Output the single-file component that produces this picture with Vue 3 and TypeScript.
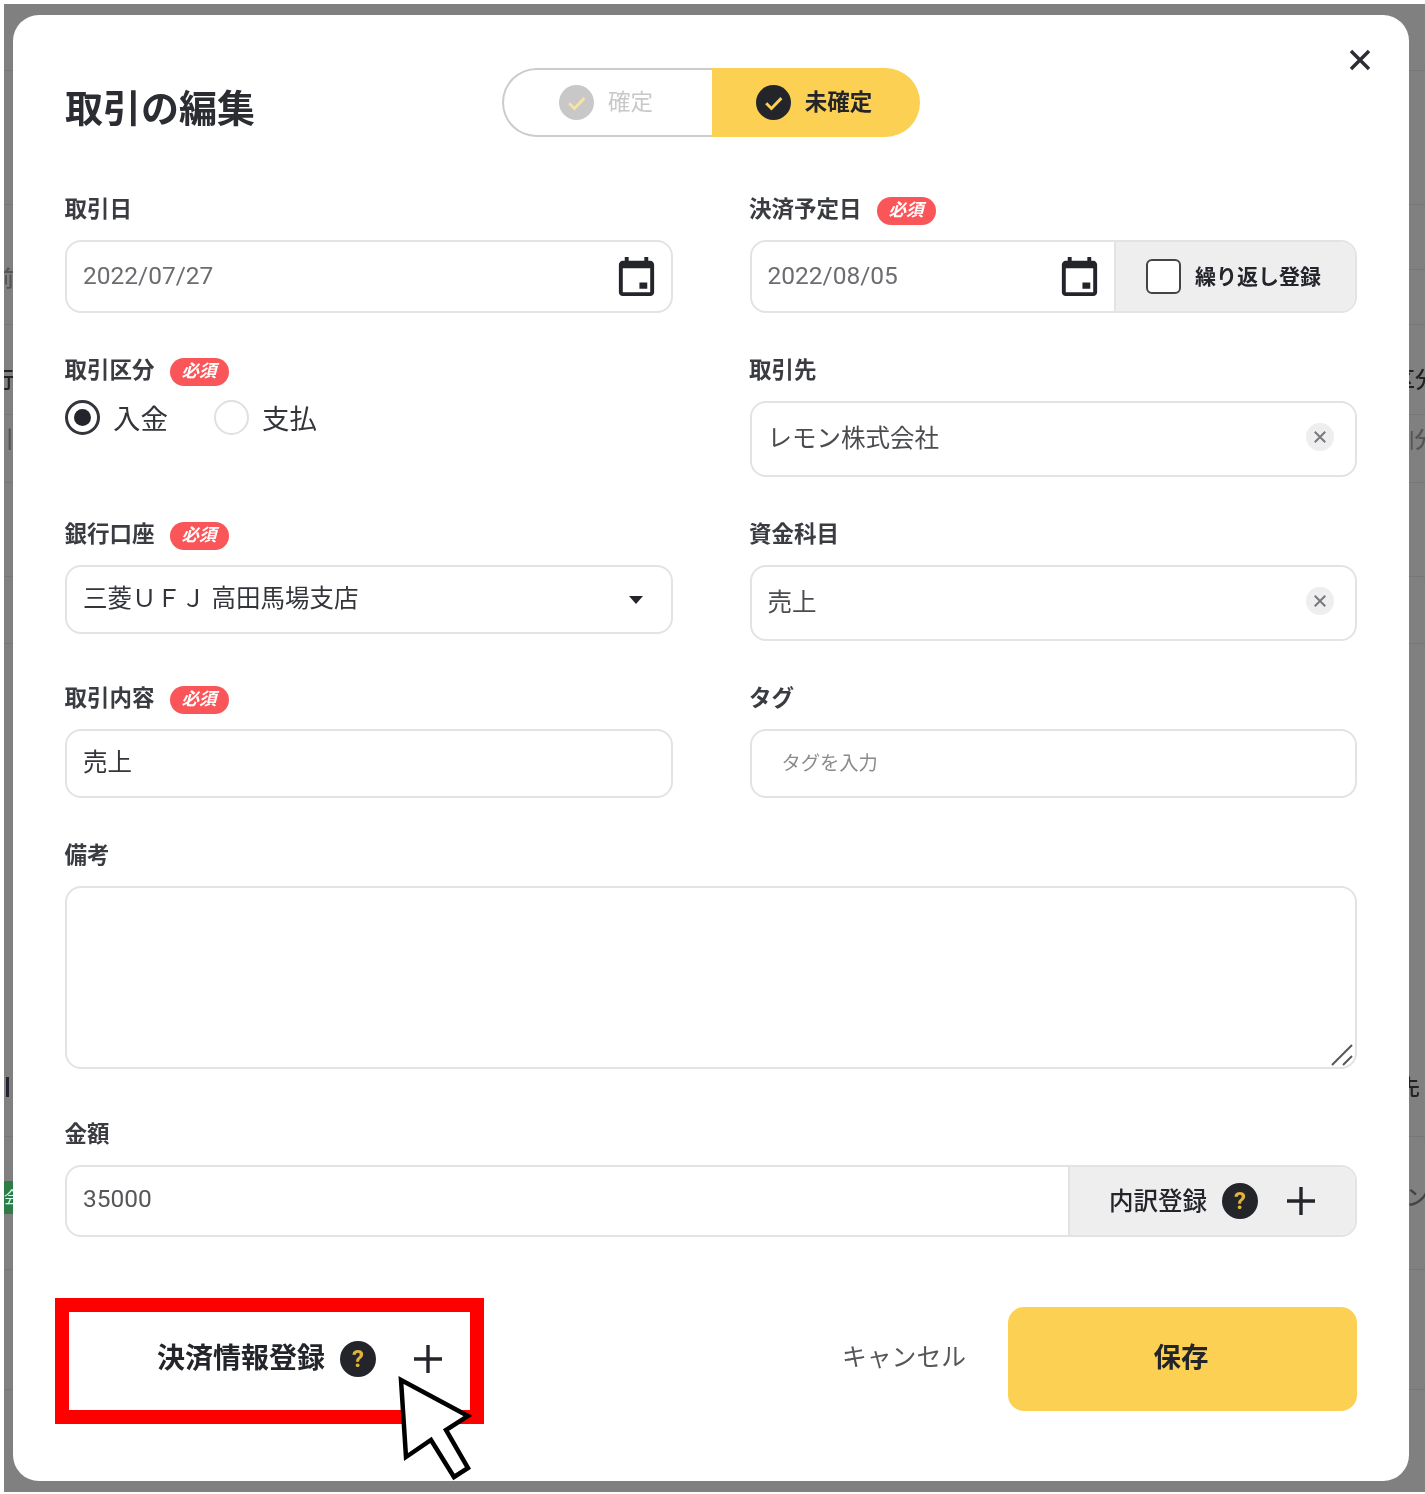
<script setup lang="ts">
const requiredMark = '必須'
const bgLines: number[] = [66, 200, 265, 320, 410, 478, 572, 639, 1132, 1265, 1385]
</script>

<template>
  <div class="page">
    <div class="overlay">
      <i v-for="y in bgLines" :key="y" class="bg-line" :style="{ top: y + 'px' }"></i>
      <span class="bg-frag f1">前</span>
      <span class="bg-frag f2">行</span>
      <span class="bg-frag f3">引</span>
      <span class="bg-bar"></span>
      <span class="bg-green">会</span>
      <span class="bg-frag r1">区分</span>
      <span class="bg-frag r2">|分</span>
      <span class="bg-frag r3">先</span>
      <span class="bg-frag r4">ン相</span>

      <section class="modal">
        <button class="close" aria-label="閉じる">
          <svg viewBox="0 0 24 24" width="24" height="24"><path d="M3 3 21 21M21 3 3 21" /></svg>
        </button>

        <header class="head">
          <h1 class="title">取引の編集</h1>
          <div class="toggle">
            <div class="seg off">
              <span class="tick grey">
                <svg viewBox="0 0 24 24" width="35" height="35"><path d="M7 12.5l3.6 3.6L17.4 9" /></svg>
              </span>
              <span class="seg-text">確定</span>
            </div>
            <div class="seg on">
              <span class="tick dark">
                <svg viewBox="0 0 24 24" width="35" height="35"><path d="M7 12.5l3.6 3.6L17.4 9" /></svg>
              </span>
              <span class="seg-text">未確定</span>
            </div>
          </div>
        </header>

        <div class="form">
          <div class="field">
            <div class="label"><span class="lt">取引日</span></div>
            <div class="box h73 date">
              <span class="value grey-text digits">2022/07/27</span>
              <svg class="cal" viewBox="0 0 24 24" width="47" height="47"><path d="M19 4h-1V2h-2v2H8V2H6v2H5C3.9 4 3 4.9 3 6v14c0 1.1.9 2 2 2h14c1.1 0 2-.9 2-2V6c0-1.1-.9-2-2-2zm0 16H5V7.8h14V20zm-5.5-5h4v3.2h-4V15z" /></svg>
            </div>
          </div>

          <div class="field">
            <div class="label"><span class="lt">決済予定日</span> <span class="badge">{{ requiredMark }}</span></div>
            <div class="box h73 split">
              <div class="split-main date with-cal">
                <span class="value grey-text digits">2022/08/05</span>
                <svg class="cal" viewBox="0 0 24 24" width="47" height="47"><path d="M19 4h-1V2h-2v2H8V2H6v2H5C3.9 4 3 4.9 3 6v14c0 1.1.9 2 2 2h14c1.1 0 2-.9 2-2V6c0-1.1-.9-2-2-2zm0 16H5V7.8h14V20zm-5.5-5h4v3.2h-4V15z" /></svg>
              </div>
              <div class="addon repeat">
                <span class="check"></span>
                <span class="addon-text">繰り返し登録</span>
              </div>
            </div>
          </div>

          <div class="field">
            <div class="label"><span class="lt">取引区分</span> <span class="badge">{{ requiredMark }}</span></div>
            <div class="radios">
              <label class="radio"><span class="dot checked"></span><span class="radio-text">入金</span></label>
              <label class="radio"><span class="dot"></span><span class="radio-text">支払</span></label>
            </div>
          </div>

          <div class="field">
            <div class="label"><span class="lt">取引先</span></div>
            <div class="box h76 clearable">
              <span class="value">レモン株式会社</span>
              <span class="clear">
                <svg viewBox="0 0 24 24" width="28" height="28"><path d="M7.5 7.5l9 9M16.500 7.5l-9 9" /></svg>
              </span>
            </div>
          </div>

          <div class="field">
            <div class="label"><span class="lt">銀行口座</span> <span class="badge">{{ requiredMark }}</span></div>
            <div class="box h69 select">
              <span class="value dark-text">三菱ＵＦＪ 高田馬場支店</span>
              <span class="caret"></span>
            </div>
          </div>

          <div class="field">
            <div class="label"><span class="lt">資金科目</span></div>
            <div class="box h76 clearable">
              <span class="value">売上</span>
              <span class="clear">
                <svg viewBox="0 0 24 24" width="28" height="28"><path d="M7.5 7.5l9 9M16.500 7.5l-9 9" /></svg>
              </span>
            </div>
          </div>

          <div class="field">
            <div class="label"><span class="lt">取引内容</span> <span class="badge">{{ requiredMark }}</span></div>
            <div class="box h69"><span class="value dark-text">売上</span></div>
          </div>

          <div class="field">
            <div class="label"><span class="lt">タグ</span></div>
            <div class="box h69"><span class="placeholder">タグを入力</span></div>
          </div>

          <div class="field wide">
            <div class="label"><span class="lt">備考</span></div>
            <div class="box memo">
              <svg class="grip" viewBox="0 0 24 24" width="24" height="24"><path d="M2 22 22 2M13 22l9-9" /></svg>
            </div>
          </div>

          <div class="field wide amount">
            <div class="label"><span class="lt">金額</span></div>
            <div class="box h72 split">
              <div class="split-main"><span class="value num">35000</span></div>
              <div class="addon detail">
                <span class="addon-text">内訳登録</span>
                <span class="help">?</span>
                <svg class="plus" viewBox="0 0 28 28" width="28" height="28"><path d="M14 0v28M0 14h28" /></svg>
              </div>
            </div>
          </div>
        </div>

        <footer class="footer">
          <div class="red-box">
            <span class="pay-label">決済情報登録</span>
            <span class="help">?</span>
            <svg class="plus" viewBox="0 0 28 28" width="28" height="28"><path d="M14 0v28M0 14h28" /></svg>
          </div>
          <div class="actions">
            <button class="cancel">キャンセル</button>
            <button class="save">保存</button>
          </div>
        </footer>

        <svg class="cursor" viewBox="0 0 80 110" width="80" height="110">
          <path d="M7 7 74 43 52 57 74 95 60 104 37 67 12 84Z" />
        </svg>
      </section>
    </div>
  </div>
</template>

<style>
html, body { margin: 0; background: #fff; }
</style>

<style scoped>
* { box-sizing: border-box; }
.page {
  width: 1425px;
  height: 1494px;
  padding: 4px 0 2px 4px;
  background: #fff;
  font-family: Roboto, "Noto Sans CJK JP", sans-serif;
  color: #23252b;
  overflow: hidden;
  filter: blur(0.45px);
}
.overlay {
  position: relative;
  width: 100%;
  height: 100%;
  padding: 11px 0 11px 9px;
  background: #808080;
  overflow: hidden;
}
.bg-line { position: absolute; left: 0; right: 0; height: 1px; background: #767676; }
.bg-frag { position: absolute; font-size: 22px; line-height: 26px; color: #333; font-weight: 500; white-space: nowrap; }
.f1 { left: -12px; top: 262px; color: #555; }
.f2 { left: -12px; top: 363px; color: #222; }
.f3 { left: -12px; top: 423px; color: #555; }
.r1 { left: 1389px; top: 363px; color: #222; }
.r2 { left: 1405px; top: 423px; color: #555; }
.r3 { left: 1394px; top: 1071px; color: #222; }
.r4 { left: 1402px; top: 1181px; color: #444; }
.bg-bar { position: absolute; left: 2px; top: 1073px; width: 3px; height: 20px; background: #223; }
.bg-green {
  position: absolute; left: 0; top: 1177px; width: 9px; height: 33px;
  background: #2e7d46; color: #cfe; font-size: 16px; line-height: 33px; overflow: hidden;
}

.modal {
  position: relative;
  width: 1396px;
  height: 1466px;
  padding: 53px 52px 0;
  background: #fff;
  border-radius: 26px;
}
.close {
  position: absolute;
  top: 33px;
  right: 37px;
  width: 24px;
  height: 24px;
  padding: 0;
  background: none;
  border: 0;
}
.close svg { display: block; fill: none; stroke: #2b2d33; stroke-width: 3.4; }

.head { display: flex; align-items: flex-start; height: 126px; }
.title {
  margin: 19px 246px 0 0;
  width: 191px;
  font-size: 38px;
  line-height: 44px;
  font-weight: 700;
  white-space: nowrap;
  color: #2b2d33;
}
.toggle { display: flex; width: 418px; height: 69px; }
.seg {
  flex: 1;
  display: flex;
  align-items: center;
  justify-content: center;
  gap: 14px;
  padding-right: 4px;
  font-size: 22.5px;
}
.seg-text { padding-bottom: 5px; }
.seg.off {
  border: 2px solid #ccc;
  border-right: 0;
  border-radius: 35px 0 0 35px;
  color: #c8c8c8;
}
.seg.on {
  background: #fcd052;
  border-radius: 0 35px 35px 0;
  font-weight: 700;
  color: #23252b;
}
.tick { display: block; width: 35px; height: 35px; border-radius: 50%; }
.tick svg { display: block; fill: none; stroke: #fcd052; stroke-width: 2; }
.tick.grey { background: #c8c8c8; }
.tick.grey svg { stroke: #f7e3a6; }
.tick.dark { background: #23252b; }

.form {
  display: grid;
  grid-template-columns: 607.5px 607.5px;
  column-gap: 77px;
  row-gap: 42px;
}
.wide { grid-column: 1 / -1; }
.amount { margin-top: 8px; }
.label {
  display: flex;
  align-items: center;
  gap: 15px;
  height: 30px;
  margin-bottom: 16px;
  font-size: 22.5px;
  font-weight: 700;
  color: #3a3c41;
  white-space: nowrap;
}
.lt { padding-bottom: 4px; margin-left: -0.5px; }
.badge {
  display: inline-block;
  width: 59px;
  height: 28px;
  margin-top: 4px;
  border-radius: 14px;
  background: #fa5558;
  color: #fff;
  font-size: 17.5px;
  line-height: 26px;
  font-weight: 700;
  font-style: italic;
  text-align: center;
}
.box {
  position: relative;
  display: flex;
  align-items: center;
  padding: 0 16px;
  border: 2px solid #e3e3e3;
  border-radius: 16px;
  background: #fff;
  overflow: hidden;
}
.h69 { height: 69px; }
.h72 { height: 72px; }
.h73 { height: 73px; }
.h76 { height: 76px; }
.memo { height: 183px; }
.value { padding-bottom: 6px; font-size: 24.5px; color: #4a4c50; white-space: nowrap; }
.value.digits { padding-bottom: 2px; }
.grey-text { color: #6b6d70; }
.dark-text { color: #33353a; }
.num { color: #55575a; }
.placeholder { margin-left: 14px; padding-bottom: 4px; font-size: 19.300px; color: #8a8a8a; }
.date { justify-content: space-between; }
.date .cal { margin-right: -5px; }
.cal { display: block; fill: #23252b; flex: none; }
.split { padding: 0; }
.split-main {
  flex: 1;
  height: 100%;
  display: flex;
  align-items: center;
  padding-left: 16px;
  min-width: 0;
}
.with-cal { padding-right: 11px; }
.with-cal .cal { margin-right: 0; }
.addon {
  flex: none;
  height: 100%;
  display: flex;
  align-items: center;
  background: #eee;
  border-left: 2px solid #e3e3e3;
  font-weight: 500;
  white-space: nowrap;
}
.addon-text { padding-bottom: 4px; }
.repeat { width: 241px; padding-left: 30px; gap: 14px; font-size: 21px; font-weight: 700; }
.check {
  display: block;
  width: 35px;
  height: 35px;
  border: 2px solid #444;
  border-radius: 6px;
  background: #fff;
}
.detail { width: 287px; padding-left: 39px; font-size: 24.5px; color: #23252b; }
.detail .help { margin-left: 15px; }
.detail .plus { margin-left: 29px; }
.help {
  flex: none;
  display: block;
  width: 36px;
  height: 36px;
  border-radius: 50%;
  background: #23252b;
  color: #e2b33b;
  font-size: 24px;
  font-weight: 700;
  line-height: 36px;
  text-align: center;
}
.plus { display: block; flex: none; fill: none; stroke: #23252b; stroke-width: 3.4; }
.clearable { justify-content: space-between; padding-right: 21px; }
.clear { display: block; width: 28px; height: 28px; margin-bottom: 4px; border-radius: 50%; background: #eee; }
.clear svg { display: block; fill: none; stroke: #77797c; stroke-width: 1.7; }
.select { justify-content: space-between; padding-right: 28px; }
.caret {
  width: 0;
  height: 0;
  border-left: 7px solid transparent;
  border-right: 7px solid transparent;
  border-top: 8px solid #23252b;
}
.grip { position: absolute; right: 1px; bottom: 0; fill: none; stroke: #55575a; stroke-width: 2; }

.radios { display: flex; gap: 46px; margin-top: -1px; }
.radio {
  display: flex;
  align-items: center;
  gap: 13px;
  height: 35px;
  font-size: 27.5px;
  color: #33353a;
}
.radio-text { padding-bottom: 2px; }
.dot {
  position: relative;
  display: block;
  width: 35px;
  height: 35px;
  border: 2px solid #e0e0e0;
  border-radius: 50%;
}
.dot.checked { border: 3px solid #33353a; }
.dot.checked::after {
  content: "";
  position: absolute;
  inset: 6px;
  border-radius: 50%;
  background: #23252b;
}

.footer {
  display: flex;
  align-items: flex-start;
  justify-content: space-between;
  margin: 61px 0 0 -10px;
}
.red-box {
  display: flex;
  align-items: center;
  justify-content: flex-end;
  width: 429px;
  height: 126px;
  padding: 0 28px 4px 0;
  border: 14px solid #f00;
  background: #fff;
}
.pay-label { padding-bottom: 6px; font-size: 28px; font-weight: 700; color: #23252b; white-space: nowrap; }
.red-box .help { margin-left: 15px; }
.red-box .plus { margin-left: 38px; }
.actions { display: flex; align-items: center; gap: 42px; margin-top: 9px; }
.cancel {
  width: 124px;
  padding: 0 0 8px;
  background: none;
  border: 0;
  font: inherit;
  font-size: 24.800px;
  color: #55575a;
  white-space: nowrap;
}
.save {
  width: 349px;
  height: 104px;
  padding: 0 3px 8px 0;
  background: #fcd052;
  border: 0;
  border-radius: 16px;
  font: inherit;
  font-size: 27.5px;
  font-weight: 700;
  color: #23252b;
}
.cursor {
  position: absolute;
  left: 381px;
  top: 1358px;
  fill: #fff;
  stroke: #000;
  stroke-width: 4.5;
}
</style>
